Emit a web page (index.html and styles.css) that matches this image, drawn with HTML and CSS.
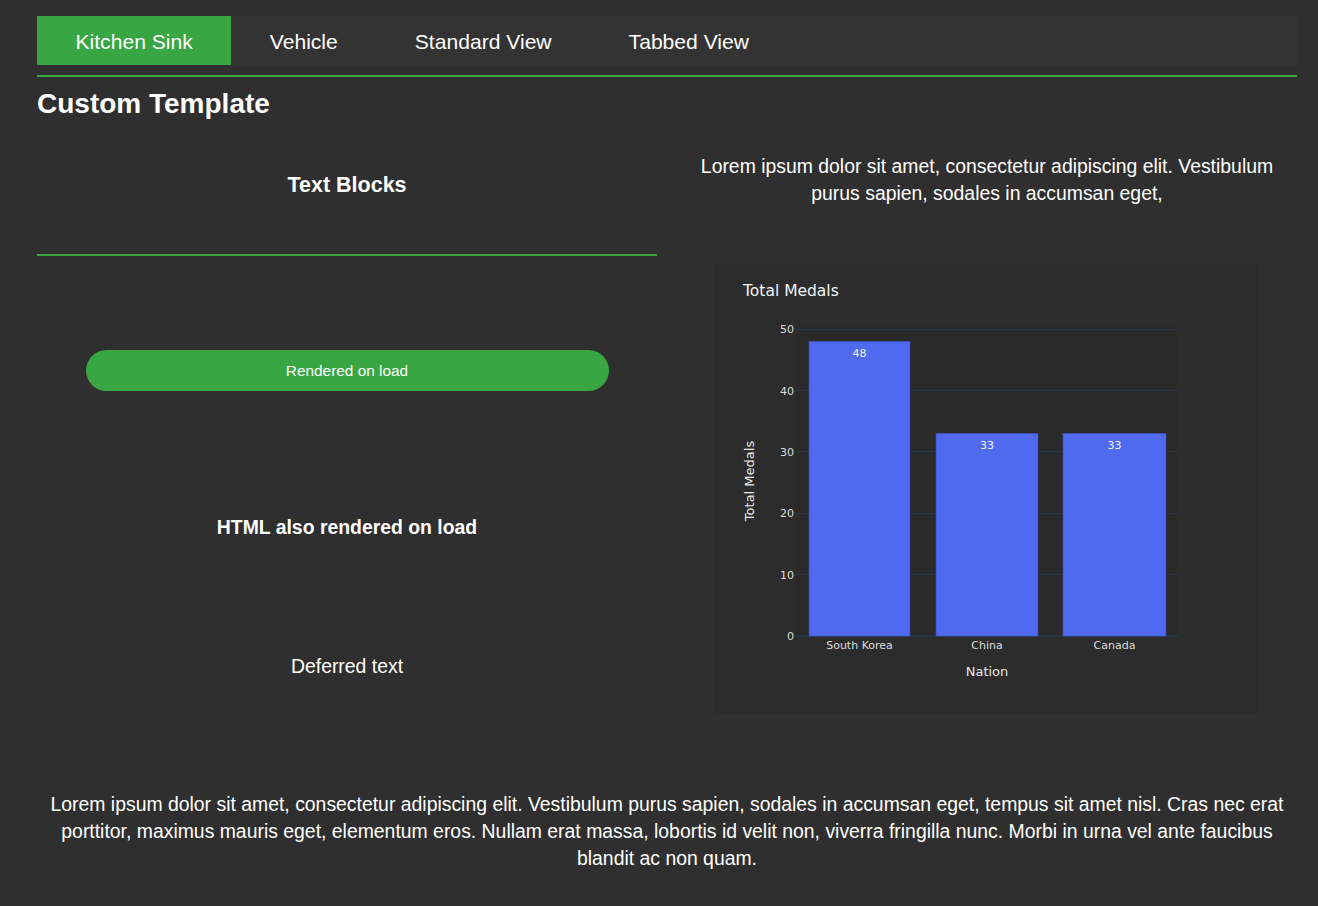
FILE: index.html
```html
<!DOCTYPE html>
<html>
<head>
<meta charset="utf-8">
<link rel="stylesheet" href="styles.css">
</head>
<body>
<div class="page">
  <nav class="tabs">
    <div class="tab active">Kitchen Sink</div>
    <div class="tab">Vehicle</div>
    <div class="tab">Standard View</div>
    <div class="tab">Tabbed View</div>
  </nav>
  <div class="rule"></div>
  <h1 class="title">Custom Template</h1>
  <div class="grid">
    <div class="col left">
      <h2 class="blocks">Text Blocks</h2>
      <div class="rule wide"></div>
      <button class="pill">Rendered on load</button>
      <div class="html-bold">HTML also rendered on load</div>
      <div class="deferred">Deferred text</div>
    </div>
    <div class="col right">
      <p class="lorem">Lorem ipsum dolor sit amet, consectetur adipiscing elit. Vestibulum purus sapien, sodales in accumsan eget,</p>
      <div class="chart">
        <svg width="544" height="449" viewBox="0 0 544 449" xmlns="http://www.w3.org/2000/svg">
          <rect x="0" y="0" width="544" height="449" fill="#2c2c2c"/>
          <rect x="81" y="61" width="382" height="310" fill="#2a2a2a"/>
          <g stroke="#283442" stroke-width="1">
            <line x1="81" y1="64.5" x2="463" y2="64.5"/>
            <line x1="81" y1="125.5" x2="463" y2="125.5"/>
            <line x1="81" y1="186.5" x2="463" y2="186.5"/>
            <line x1="81" y1="248.5" x2="463" y2="248.5"/>
            <line x1="81" y1="309.5" x2="463" y2="309.5"/>
            <line x1="81" y1="371" x2="463" y2="371" stroke-width="2"/>
          </g>
          <g fill="#4f69ef" stroke="#3a4fb8" stroke-width="0.6">
            <rect x="94" y="76.3" width="101" height="294.7"/>
            <rect x="221" y="168.4" width="102" height="202.6"/>
            <rect x="348" y="168.4" width="103" height="202.6"/>
          </g>
          <g font-family="'DejaVu Sans', Verdana, sans-serif" fill="#f2f5fa" font-size="11" text-anchor="middle">
            <text x="144.5" y="92">48</text>
            <text x="272" y="184">33</text>
            <text x="399.5" y="184">33</text>
          </g>
          <g font-family="'DejaVu Sans', Verdana, sans-serif" fill="#dcdcdc" font-size="11" text-anchor="end">
            <text x="79" y="68">50</text>
            <text x="79" y="129.5">40</text>
            <text x="79" y="190.5">30</text>
            <text x="79" y="252">20</text>
            <text x="79" y="313.5">10</text>
            <text x="79" y="375">0</text>
          </g>
          <g font-family="'DejaVu Sans', Verdana, sans-serif" fill="#dcdcdc" font-size="11" text-anchor="middle">
            <text x="144.5" y="384">South Korea</text>
            <text x="272" y="384">China</text>
            <text x="399.5" y="384">Canada</text>
          </g>
          <g font-family="'DejaVu Sans', Verdana, sans-serif" fill="#e8e8e8" font-size="13" text-anchor="middle">
            <text x="272" y="411">Nation</text>
            <text x="0" y="0" transform="translate(39 216) rotate(-90)">Total Medals</text>
          </g>
          <text x="28" y="31" font-family="'DejaVu Sans', Verdana, sans-serif" font-size="15.5" fill="#f2f5fa">Total Medals</text>
        </svg>
      </div>
    </div>
  </div>
  <p class="footer-text">Lorem ipsum dolor sit amet, consectetur adipiscing elit. Vestibulum purus sapien, sodales in accumsan eget, tempus sit amet nisl. Cras nec erat porttitor, maximus mauris eget, elementum eros. Nullam erat massa, lobortis id velit non, viverra fringilla nunc. Morbi in urna vel ante faucibus blandit ac non quam.</p>
</div>
</body>
</html>
```

FILE: styles.css
```css
html, body {
  margin: 0;
  padding: 0;
  background: #2f2f2f;
  color: #ffffff;
  font-family: "Liberation Sans", Arial, Helvetica, sans-serif;
}

.page {
  width: 1260px;
  margin-left: 37px;
  padding-top: 16px;
  padding-bottom: 20px;
}

.tabs {
  display: flex;
  height: 49px;
  background: #333333;
}

.tab {
  display: flex;
  align-items: center;
  padding: 2px 38.5px 0 38.5px;
  font-size: 21.1px;
  color: #ffffff;
}

.tab.active {
  background: #38a642;
}

.rule {
  height: 2px;
  background-color: #38a642;
  margin-top: 10px;
}

.title {
  margin: 11px 0 0 0;
  font-size: 28px;
  line-height: 32px;
  font-weight: bold;
}

.grid {
  display: grid;
  grid-template-columns: 620px 620px;
  column-gap: 20px;
  margin-top: 12px;
}

.col {
  display: flex;
  flex-direction: column;
}

.left {
  align-items: stretch;
}

.blocks {
  margin: 41px 0 0 0;
  font-size: 21.5px;
  line-height: 24px;
  font-weight: bold;
  text-align: center;
}

.rule.wide {
  margin-top: 57px;
}

.pill {
  align-self: center;
  width: 523px;
  height: 41px;
  margin-top: 94px;
  border: none;
  border-radius: 21px;
  background: #38a642;
  color: #ffffff;
  font-family: "Liberation Sans", Arial, Helvetica, sans-serif;
  font-size: 15.4px;
  padding: 0;
}

.html-bold {
  margin-top: 124px;
  font-size: 19.4px;
  line-height: 24px;
  font-weight: bold;
  text-align: center;
}

.deferred {
  margin-top: 115px;
  font-size: 19.4px;
  line-height: 24px;
  text-align: center;
}

.lorem {
  margin: 21px 0 0 0;
  padding: 0 12px;
  font-size: 19.4px;
  line-height: 27px;
  text-align: center;
}

.chart {
  align-self: center;
  width: 544px;
  height: 449px;
  margin-top: 58px;
}

.chart svg {
  display: block;
}

.footer-text {
  margin: 77px 0 0 0;
  font-size: 19.4px;
  line-height: 27px;
  text-align: center;
}
```
